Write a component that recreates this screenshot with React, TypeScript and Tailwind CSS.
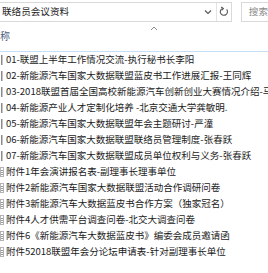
import React from 'react';

const files: { name: string; kind: 'ppt' | 'doc' }[] = [
  { name: '01-联盟上半年工作情况交流-执行秘书长李阳', kind: 'ppt' },
  { name: '02-新能源汽车国家大数据联盟蓝皮书工作进展汇报-王同辉', kind: 'ppt' },
  { name: '03-2018联盟首届全国高校新能源汽车创新创业大赛情况介绍-马', kind: 'ppt' },
  { name: '04-新能源产业人才定制化培养 -北京交通大学龚敏明.', kind: 'ppt' },
  { name: '05-新能源汽车国家大数据联盟年会主题研讨-严潼', kind: 'ppt' },
  { name: '06-新能源汽车国家大数据联盟联络员管理制度-张春跃', kind: 'ppt' },
  { name: '07-新能源汽车国家大数据联盟成员单位权利与义务-张春跃', kind: 'ppt' },
  { name: '附件1年会演讲报名表-副理事长理事单位', kind: 'doc' },
  { name: '附件2新能源汽车国家大数据联盟活动合作调研问卷', kind: 'doc' },
  { name: '附件3新能源汽车大数据蓝皮书合作方案（独家冠名）', kind: 'doc' },
  { name: '附件4人才供需平台调查问卷-北交大调查问卷', kind: 'doc' },
  { name: '附件6《新能源汽车大数据蓝皮书》编委会成员邀请函', kind: 'doc' },
  { name: '附件52018联盟年会分论坛申请表-针对副理事长单位', kind: 'doc' },
];

function FileIcon({ kind }: { kind: 'ppt' | 'doc' }) {
  if (kind === 'ppt') {
    return (
      <svg width="5" height="16" viewBox="0 0 5 16" className="shrink-0">
        <rect x="1" y="3" width="1.5" height="10" fill="#8a8a8a" />
      </svg>
    );
  }
  return (
    <svg width="5" height="16" viewBox="0 0 5 16" className="shrink-0">
      <rect x="0.5" y="3.5" width="3" height="9" fill="#fff" stroke="#b4b4b4" strokeWidth="1" />
      <rect x="1" y="6" width="2" height="1" fill="#9a9a9a" />
      <rect x="1" y="8" width="2" height="1" fill="#9a9a9a" />
      <rect x="1" y="10" width="2" height="1" fill="#9a9a9a" />
    </svg>
  );
}

export default function App() {
  return (
    <div
      className="relative w-[268px] h-[273px] overflow-hidden bg-white text-[#1b1b1b]"
      style={{ fontFamily: '"Noto Sans CJK SC", "Microsoft YaHei", sans-serif' }}
    >
      {/* Address + search */}
      <div className="flex items-start pt-[2px] h-[23px]">
        <div className="flex items-center w-[241px] h-[20px] border border-l-0 border-[#d9d9d9]">
          <span className="flex-1 pl-[2px] text-[9.6px] leading-none whitespace-nowrap">联络员会议资料</span>
          <svg width="8" height="6" viewBox="0 0 8 6" className="mr-[4px]">
            <path d="M1 1.5 L4 4.5 L7 1.5" fill="none" stroke="#555" strokeWidth="1.1" />
          </svg>
          <div className="w-px h-[18px] bg-[#e3e3e3]" />
          <svg width="12" height="12" viewBox="0 0 12 12" className="mx-[1px]">
            <path d="M8.6 3.3 A3.6 3.6 0 1 1 4 2.6" fill="none" stroke="#555" strokeWidth="1.1" />
            <path d="M3.2 1 L5.4 2.6 L3.6 4.4" fill="none" stroke="#555" strokeWidth="1.1" />
          </svg>
        </div>
        <div className="ml-[9px] flex items-center flex-1 h-[20px] border border-r-0 border-[#d9d9d9] pl-[7px]">
          <span className="text-[9.6px] leading-none text-[#8a8a8a] whitespace-nowrap">搜索</span>
        </div>
      </div>

      {/* Column header */}
      <div className="relative h-[29px] border-b border-[#c6dff4]">
        <svg width="8" height="5" viewBox="0 0 8 5" className="absolute left-[150px] top-[3px]">
          <path d="M1 4 L4 1 L7 4" fill="none" stroke="#8a8a8a" strokeWidth="1" />
        </svg>
        <div className="flex items-center h-full pb-[2px]">
          <span className="text-[10px] leading-none text-[#4f5f7e]">称</span>
        </div>
      </div>

      {/* File rows */}
      <div className="flex flex-col">
        {files.map(f => (
          <div key={f.name} className="flex items-center h-[16px] whitespace-nowrap">
            <FileIcon kind={f.kind} />
            <span className="ml-[1px] text-[9.5px] leading-none">{f.name}</span>
          </div>
        ))}
      </div>
    </div>
  );
}
